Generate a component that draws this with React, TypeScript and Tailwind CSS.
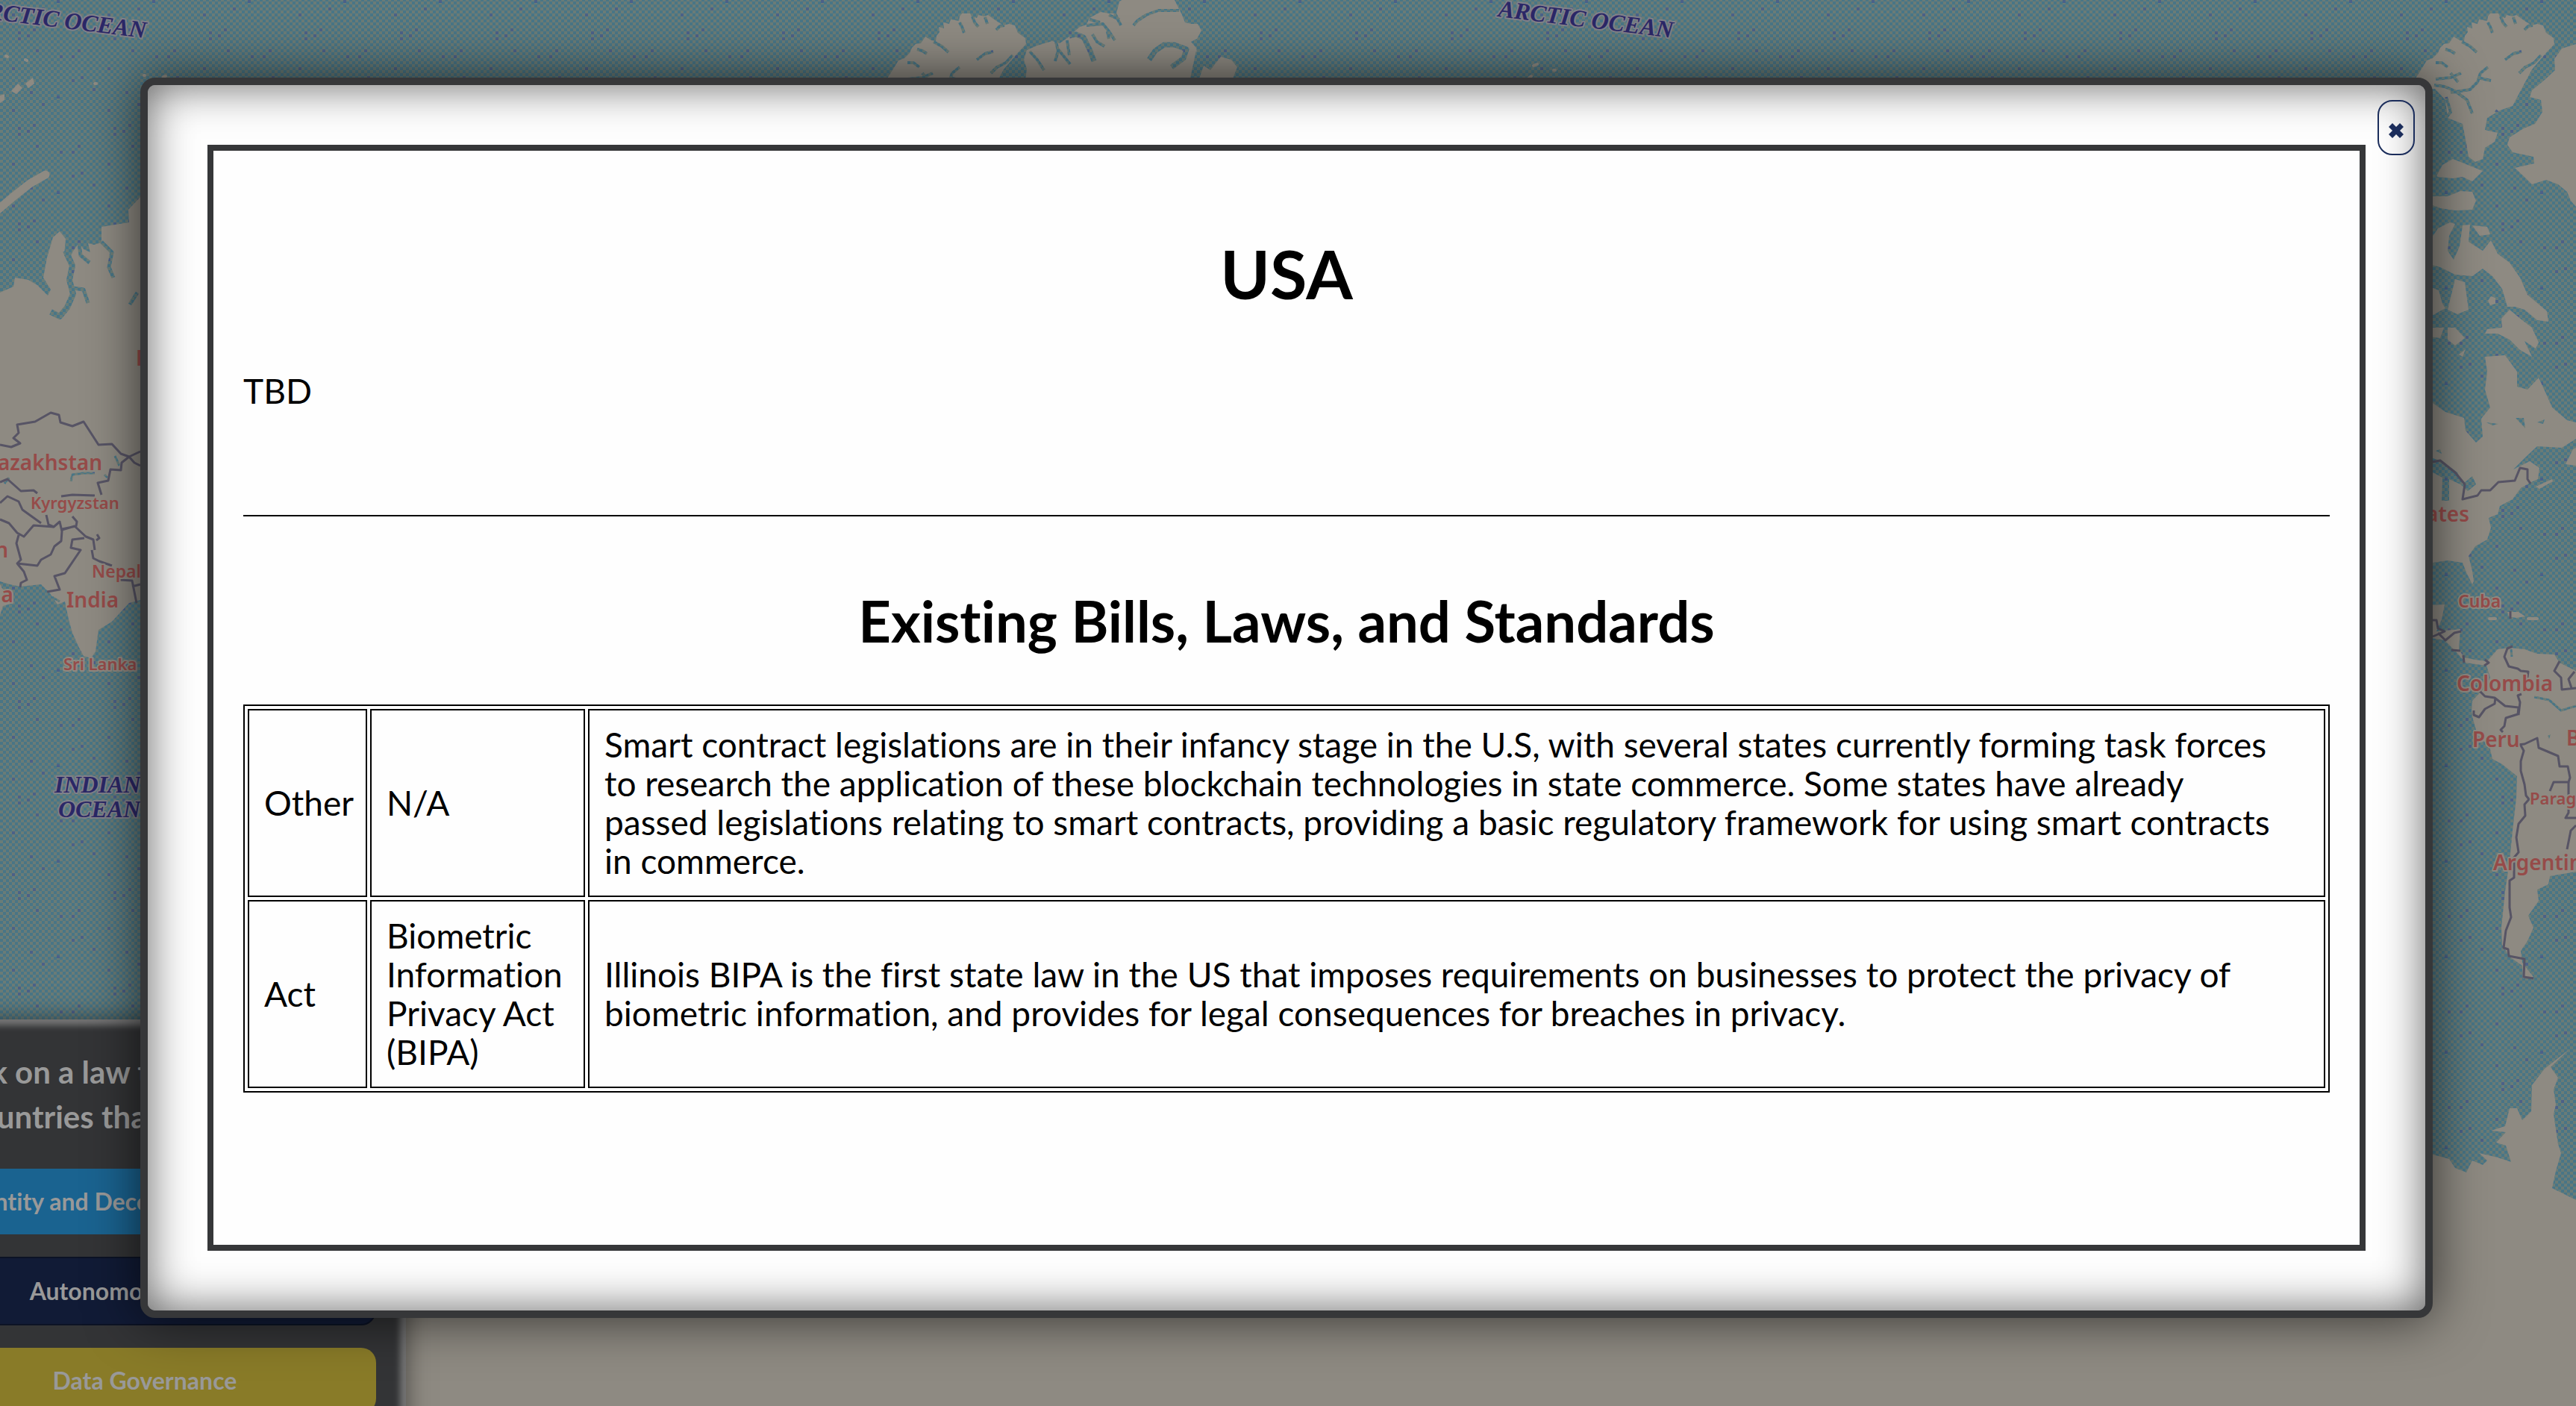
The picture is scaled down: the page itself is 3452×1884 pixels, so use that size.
import type { ReactNode } from "react";

type Law = { kind: string; name: string; summary: string };

const laws: Law[] = [
  {
    kind: "Other",
    name: "N/A",
    summary:
      "Smart contract legislations are in their infancy stage in the U.S, with several states currently forming task forces to research the application of these blockchain technologies in state commerce. Some states have already passed legislations relating to smart contracts, providing a basic regulatory framework for using smart contracts in commerce.",
  },
  {
    kind: "Act",
    name: "Biometric Information Privacy Act (BIPA)",
    summary:
      "Illinois BIPA is the first state law in the US that imposes requirements on businesses to protect the privacy of biometric information, and provides for legal consequences for breaches in privacy.",
  },
];

// Offsets of the darker specks inside one 128px map tile.
const specks: [number, number][] = [
  [50, 68], [82, 76], [106, 68], [98, 76], [18, 92], [110, 104], [98, 108], [126, 120],
  [42, 124], [78, 2], [58, 12], [18, 20], [46, 40], [26, 44], [38, 48], [26, 52],
];

const ellesmere =
  "M3235 108L3244 94L3252 81L3260 78L3267 71L3270 64L3275 59L3282 58L3288 49L3296 54L3302 55L3303 48L3307 43L3306 36L3313 38L3312 30L3320 32L3322 26L3333 28L3334 22L3337 18L3348 18L3350 22L3357 24L3359 20L3367 22L3372 20L3383 28L3393 34L3400 32L3408 34L3412 44L3422 51L3423 59L3410 73L3393 93L3377 123L3367 142L3350 148L3333 158L3330 174L3347 178L3343 190L3330 198L3327 213L3317 217L3308 210L3303 182L3300 166L3280 158L3277 134L3263 119L3240 120Z";
const ellesmereFjords =
  "M3334 30L3337 36L3340 44M3351 22L3354 30L3359 36M3368 23L3371 32M3383 40L3388 35L3394 34M3299 56L3310 62L3319 70M3277 66L3284 68L3290 72M3264 84L3272 84L3280 90M3357 80L3368 72L3379 69M3376 98L3384 90L3396 84L3405 74M3264 106L3284 104L3298 98M3262 114L3276 116L3290 122L3306 134L3313 152M3284 124L3310 120L3320 110L3324 98L3334 90M3320 104L3338 108M3284 98L3294 110M3272 176L3276 168L3286 170M3280 190L3290 180L3298 182M3286 206L3300 204L3304 192M3280 164L3277 180L3280 200M3334 160L3344 158L3356 164M3344 148L3354 156M3278 130L3284 150L3276 160";
const axelHeiberg =
  "M1374 108L1376 92L1372 80L1376 67L1390 61L1410 55L1420 58L1433 49L1440 42L1447 36L1456 33L1460 24L1475 16L1486 18L1496 18L1500 2L1510 -4L1572 -4L1577 6L1584 20L1588 30L1596 32L1605 32L1610 41L1604 52L1596 56L1603 64L1606 80L1602 108ZM1606 108L1613 88L1622 94L1628 86L1636 76L1650 80L1658 90L1651 108Z";
const axelHeibergFjords =
  "M1415 56L1418 68L1414 82M1418 66L1426 76L1434 86M1430 54L1433 74M1456 34L1478 32L1486 42L1494 54M1464 46L1470 56L1480 62M1494 18L1502 34M1519 34L1524 28L1536 20L1552 14L1580 14M1484 42L1486 52M1460 26L1474 30M1486 20L1500 26M1380 69L1390 80L1399 94";
const canadaIslands =
  "M3265 236L3273 221L3287 213L3307 221L3327 229L3313 243L3300 237L3287 239L3267 237ZM3255 263L3280 263L3297 256L3313 257L3318 269L3313 281L3290 282L3270 279L3255 273ZM3255 324L3267 306L3283 298L3290 300L3282 316L3280 336L3288 348L3296 330L3300 302L3310 301L3308 324L3327 336L3338 322L3347 340L3363 352L3377 372L3387 395L3413 417L3415 431L3400 429L3383 415L3370 411L3360 411L3353 387L3340 370L3327 360L3313 370L3290 368L3270 358L3255 354ZM3313 302L3333 304L3337 314L3323 316ZM3352 427L3363 415L3380 429L3393 439L3402 459L3398 467L3383 457L3393 478L3377 469L3363 455L3347 447L3330 447L3333 441L3353 439ZM3280 415L3290 374L3303 378L3308 415L3293 421ZM3255 384L3268 389L3273 407L3277 413L3255 425ZM3280 439L3290 439L3303 453L3290 463L3280 455ZM3255 439L3275 439L3270 453L3255 451ZM3334 403L3338 397L3344 399L3344 407L3337 409ZM3295 475L3304 468L3300 478Z";
const greenland =
  "M3452 59L3433 65L3423 79L3424 94L3410 107L3393 121L3390 130L3405 134L3407 150L3397 166L3382 172L3363 184L3360 194L3367 204L3395 210L3396 219L3370 225L3383 237L3393 247L3412 241L3428 247L3440 257L3445 269L3452 277L3700 277L3700 59Z";
const northAmerica =
  "M3230 535L3260 540L3277 552L3302 560L3304 577L3318 593L3327 585L3325 561L3337 546L3330 522L3333 498L3330 478L3357 476L3373 498L3373 518L3387 522L3402 506L3413 530L3420 546L3440 563L3452 566L3452 588L3433 600L3400 598L3385 612L3368 629L3390 618L3403 627L3401 642L3390 647L3378 654L3367 669L3350 678L3347 689L3335 694L3338 707L3333 723L3317 732L3308 745L3313 765L3315 779L3313 783L3305 767L3300 754L3280 751L3260 754L3230 760ZM3398 652L3420 642L3421 645L3403 655ZM3438 622L3448 602L3452 600L3452 624Z";
const southAmerica =
  "M3230 812L3276 810L3272 830L3265 846L3297 843L3295 870L3302 881L3317 884L3333 886L3347 870L3363 868L3383 870L3400 876L3423 877L3430 888L3452 899L3452 1168L3417 1174L3415 1185L3400 1192L3402 1207L3388 1227L3395 1243L3387 1261L3378 1274L3380 1290L3395 1309L3381 1311L3380 1294L3363 1282L3353 1266L3352 1243L3357 1194L3363 1154L3367 1113L3372 1069L3373 1040L3353 1024L3340 1017L3336 1000L3320 985L3314 964L3312 953L3313 939L3330 921L3337 908L3332 892L3304 888L3290 872L3276 858L3230 850ZM3360 820L3375 820L3384 826L3372 828L3362 826Z";
const antarctica =
  "M3200 1540L3260 1547L3282 1553L3290 1565L3305 1571L3313 1555L3327 1561L3333 1555L3322 1545L3347 1551L3365 1557L3358 1535L3345 1531L3358 1517L3338 1515L3357 1509L3363 1485L3373 1485L3380 1501L3392 1489L3393 1454L3410 1432L3443 1406L3418 1430L3428 1444L3422 1460L3425 1480L3422 1493L3428 1533L3432 1545L3425 1569L3420 1592L3452 1608L3452 1884L400 1884L400 1540Z";
const asia =
  "M230 240L188 264L172 281L173 298L136 304L136 325L126 328L118 326L121 338L112 334L106 325L97 338L92 350L86 342L88 320L80 310L71 318L63 345L58 372L68 388L64 396L50 382L38 375L20 372L18 384L0 392L0 779L13 783L27 786L55 783L67 795L77 810L87 806L92 830L97 848L105 866L112 879L122 882L128 873L132 844L150 833L173 808L188 804L230 800ZM0 785L14 800L18 808L4 812L0 824ZM15 122L24 112L30 118L22 126ZM34 112L44 104L46 112L38 118ZM0 128L6 126L6 134L0 138Z";
const lakes =
  "M3260 614L3273 618L3293 633L3300 649L3313 638L3318 649L3307 658L3297 649L3282 642L3282 671L3272 671L3273 640L3260 633ZM3264 604L3270 602L3272 608ZM3371 560L3382 560L3384 574ZM3400 566L3410 562L3408 568ZM3414 986L3418 984L3416 990ZM3332 566L3348 568L3340 570Z";

const borders = [
  "M3260 619L3270 617L3290 633L3303 649L3300 669L3320 664L3325 657L3337 657L3348 646L3370 644L3377 627L3387 629L3387 642L3391 648",
  "M3260 831L3265 831L3267 842L3276 846L3260 853M3267 848L3277 858L3289 848L3298 846M3285 871L3297 872M3301 878L3302 888M3330 884L3335 888L3329 892",
  "M3364 819L3364 829",
  "M3367 866L3360 869L3356 880L3362 893L3374 896L3378 899L3388 900L3386 914",
  "M3323 926L3330 933L3343 935L3357 946L3375 948L3374 957L3358 962L3356 973L3351 978L3354 981M3344 935L3343 943L3330 950L3322 961L3315 958L3315 952M3379 930L3374 932L3377 941L3375 958",
  "M3373 998L3383 997L3400 989L3402 1002L3428 1013L3430 1027L3441 1027L3444 1042L3442 1048L3422 1048L3417 1060",
  "M3377 997L3382 1006L3378 1020L3378 1033L3383 1051L3385 1066L3389 1071L3383 1078L3384 1093L3375 1104L3372 1122L3375 1142L3369 1149L3369 1176L3363 1180L3363 1216L3365 1229L3358 1247L3355 1270L3361 1272L3362 1281L3383 1285L3382 1309L3395 1311",
  "M3430 886L3423 899L3432 908L3433 924L3452 922M3450 900L3442 910L3446 922M3442 1048L3442 1089L3438 1096L3452 1096M3452 1106L3445 1113L3440 1138",
  "M0 596L15 599L27 594L18 587L25 580L23 569L47 565L68 553L79 556L81 566L97 571L112 565L132 596L150 595L162 608L173 612L188 605M173 612L180 620L188 624M173 612L163 620L162 630L148 629L145 644L131 647L136 663",
  "M0 646L10 642L28 658L45 657L50 661M0 674L10 665L25 672L30 683L55 701M0 696L12 701L23 714L32 719L45 704L72 706L80 699L83 712L82 725L73 732L68 743L55 750L50 758L23 755L28 750L22 728L25 717M23 755L32 766L36 777L28 781L27 787",
  "M63 793L80 790L73 772L87 768L108 737L95 734L97 723L113 721M83 710L100 705L115 719L125 723L127 737M123 737L125 748L133 752L150 758M82 665L97 663L127 664M62 690L65 703L72 706M97 692L103 699L102 705L83 709M130 716L133 721L129 724M160 777L177 778L183 808M177 786L188 783",
];

const countryLabels: { text: string; x: number; y: number; size: number; end?: boolean }[] = [
  { text: "azakhstan", x: 137, y: 630, size: 28, end: true },
  { text: "Kyrgyzstan", x: 41, y: 682, size: 22 },
  { text: "n", x: 11, y: 747, size: 28, end: true },
  { text: "ia", x: 18, y: 807, size: 28, end: true },
  { text: "Nepal", x: 123, y: 774, size: 23 },
  { text: "India", x: 89, y: 814, size: 28 },
  { text: "Sri Lanka", x: 85, y: 898, size: 22 },
  { text: "R", x: 182, y: 490, size: 28 },
  { text: "ates", x: 3309, y: 699, size: 28, end: true },
  { text: "Cuba", x: 3294, y: 814, size: 23 },
  { text: "Colombia", x: 3292, y: 926, size: 28 },
  { text: "Peru", x: 3313, y: 1001, size: 28 },
  { text: "B", x: 3439, y: 999, size: 28 },
  { text: "Parag", x: 3390, y: 1078, size: 22 },
  { text: "Argentin", x: 3341, y: 1166, size: 28 },
];

function WorldMap() {
  return (
    <svg
      className="absolute inset-0 h-full w-full"
      viewBox="0 0 3452 1884"
      preserveAspectRatio="xMidYMid slice"
      role="img"
      aria-label="World map"
    >
      <defs>
        <pattern id="weave" width="8" height="8" patternUnits="userSpaceOnUse">
          <rect width="8" height="8" fill="#6a7c77" />
          <rect x="0" y="2" width="4" height="4" fill="#497586" />
          <rect x="4" y="6" width="4" height="2" fill="#497586" />
          <rect x="4" y="0" width="4" height="2" fill="#497586" />
        </pattern>
        <pattern id="specks" width="128" height="128" patternUnits="userSpaceOnUse">
          {specks.map(([x, y]) => (
            <rect key={`${x}-${y}`} x={x - 2} y={y - 2} width="4" height="4" fill="#4a6189" />
          ))}
        </pattern>
        <mask id="water" maskUnits="userSpaceOnUse" x="0" y="0" width="3452" height="1884">
          <rect width="3452" height="1884" fill="#fff" />
          <g fill="#000">
            <path d={ellesmere} />
            <path d={greenland} />
            <path d={canadaIslands} />
            <path d={northAmerica} />
            <path d={southAmerica} />
            <path d={antarctica} />
            <path d={asia} />
            <path d={ellesmere} transform="translate(-2048 0)" />
            <path d={axelHeiberg} />
          </g>
          <g fill="none" stroke="#000" strokeLinecap="round" strokeWidth="11">
            <path d="M-6 284L16 265L40 246L61 234" />
          </g>
          <g fill="none" stroke="#000" strokeLinecap="round" strokeWidth="4">
            <path d="M193 101L194 101M219 103L222 102M127 112L129 112M34 80L36 81M8 75L10 76M3336 829L3344 829M3388 829L3400 829M2055 88L2060 86M2045 108L2052 102M2082 94L2084 94M2240 114L2244 114M2266 116L2272 114" />
          </g>
          <g fill="none" stroke="#fff" strokeWidth="4" strokeLinejoin="round">
            <path d={ellesmereFjords} />
            <path d={ellesmereFjords} transform="translate(-2048 0)" />
            <path d={axelHeibergFjords} />
            <path d="M1433 48L1442 46L1452 50L1460 66L1466 82M1540 80L1548 68L1560 60L1574 60L1590 66L1586 78L1570 90M1606 70L1598 108" strokeWidth="7" />
            <path d="M88 336L97 356L93 375L98 394L90 412L80 424L68 418" strokeWidth="8" />
            <path d="M98 386L112 388L118 406" strokeWidth="5" />
            <path d="M106 326L108 342L120 352M136 324L150 338L146 358L152 372M174 408L184 392" strokeWidth="5" />
            <path d="M95 645L97 636L112 634L127 634M154 611L160 624M140 636L144 640M6 648L12 640M70 800L80 806" strokeWidth="3" />
            <path d="M3396 934L3416 938L3432 952L3452 946M3365 870L3366 880" strokeWidth="3" />
          </g>
          <path d={lakes} fill="#fff" />
        </mask>
      </defs>
      <rect width="3452" height="1884" fill="#8e8a82" />
      <g mask="url(#water)">
        <rect width="3452" height="1884" fill="url(#weave)" />
        <rect width="3452" height="1884" fill="url(#specks)" />
      </g>
      <g fill="none" stroke="#575465" strokeWidth="3" strokeLinejoin="round">
        {borders.map((d) => (
          <path key={d} d={d} />
        ))}
      </g>
      <g
        className="font-['Noto_Sans',sans-serif] font-semibold"
        fill="#964b49"
        stroke="#8e8a82"
        strokeWidth="4"
        strokeLinejoin="round"
        paintOrder="stroke"
      >
        {countryLabels.map((l) => (
          <text key={l.text} x={l.x} y={l.y} fontSize={l.size} textAnchor={l.end ? "end" : "start"}>
            {l.text}
          </text>
        ))}
      </g>
      <g
        className="font-['Liberation_Serif',serif] font-bold italic"
        fill="#2b2767"
        stroke="#80818a"
        strokeWidth="4"
        strokeLinejoin="round"
        paintOrder="stroke"
        fontSize="32"
      >
        <text x="73" y="1062">INDIAN</text>
        <text x="78" y="1095">OCEAN</text>
        <text transform="translate(-18 25) rotate(7)">RCTIC OCEAN</text>
        <text transform="translate(2007 22) rotate(7)">ARCTIC OCEAN</text>
      </g>
    </svg>
  );
}

function LawButton({ className, children }: { className: string; children: ReactNode }) {
  return (
    <button
      type="button"
      className={`w-full rounded-[20px] text-center text-[32px] font-bold whitespace-nowrap text-[#999] ${className}`}
    >
      {children}
    </button>
  );
}

function LawPicker() {
  return (
    <aside className="absolute top-[1366px] -left-[156px] flex w-[700px] flex-col gap-[30px] bg-[#333436] px-10 pt-10 pb-10 shadow-[0_0_30px_rgba(0,0,0,0.5),inset_0_0_8px_8px_#747474]">
      <p className="mb-[10px] text-center text-[42px] leading-[60px] font-bold whitespace-nowrap text-[#999]">
        Click on a law to see all of the
        <br />
        countries that reference it
      </p>
      <LawButton className="h-[88px] bg-[#1a6390]">Identity and Decentralized Storage</LawButton>
      <LawButton className="h-[92px] border-2 border-[#0c1325] bg-[#111b36]">Autonomous Systems</LawButton>
      <LawButton className="h-[88px] bg-[#897b28]">Data Governance</LawButton>
    </aside>
  );
}

function LawTable() {
  return (
    <table className="w-full border-separate border-spacing-1 border-2 border-black text-left">
      <tbody>
        {laws.map((law) => (
          <tr key={law.kind}>
            <td className="w-[160px] border-2 border-black py-5 pr-3 pl-5">{law.kind}</td>
            <td className="w-[288px] border-2 border-black p-5">{law.name}</td>
            <td className="border-2 border-black py-5 pr-12 pl-5">{law.summary}</td>
          </tr>
        ))}
      </tbody>
    </table>
  );
}

export default function App() {
  return (
    <div className="relative h-screen overflow-hidden bg-[#8e8a82] font-['Lato',sans-serif] text-[46px] leading-[52px] text-black [font-variant-ligatures:no-common-ligatures]">
      <WorldMap />
      <LawPicker />
      <div
        role="dialog"
        aria-modal="true"
        aria-labelledby="country"
        className="relative mt-[104px] mr-[192px] ml-[188px] rounded-[20px] border-10 border-[#363739] bg-[#fefefe] p-20 shadow-[0_0_70px_rgba(0,0,0,0.65),inset_0_0_60px_rgba(0,0,0,0.62)]"
      >
        <button
          type="button"
          aria-label="Close"
          className="absolute top-5 right-[14px] flex h-[74px] w-[50px] items-center justify-center rounded-[20px] border-2 border-[#1b2d5b] pt-2 text-[#1b2d5b]"
        >
          <svg className="size-5" viewBox="0 0 20 20" fill="currentColor" aria-hidden="true">
            <path d="M5 0L10 5L15 0L20 5L15 10L20 15L15 20L10 15L5 20L0 15L5 10L0 5Z" />
          </svg>
        </button>
        <section className="border-8 border-[#363739] bg-[#fefefe] px-10 pt-28 pb-[204px]">
          <h1 id="country" className="text-center text-[90px] leading-[104px] font-bold">
            USA
          </h1>
          <p className="mt-20">TBD</p>
          <hr className="mt-[140px] border-t-2 border-black" />
          <h2 className="mt-24 mb-[68px] text-center text-[76px] leading-[88px] font-bold">
            Existing Bills, Laws, and Standards
          </h2>
          <LawTable />
        </section>
      </div>
    </div>
  );
}
